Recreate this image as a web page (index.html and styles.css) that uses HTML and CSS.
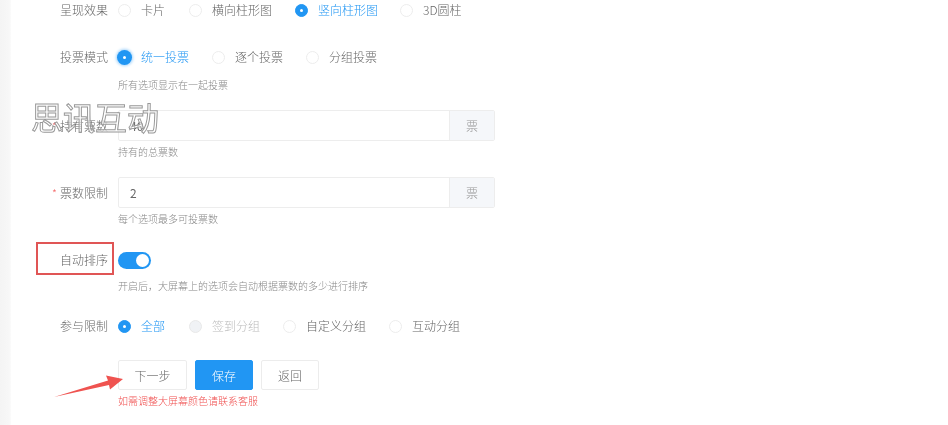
FILE: index.html
```html
<!DOCTYPE html>
<html lang="zh-CN">
<head>
<meta charset="utf-8">
<title>投票设置</title>
<link rel="stylesheet" href="styles.css">
</head>
<body>
<main class="page">
  <form class="form">
    <div class="row gap-17">
      <span class="label">呈现效果</span>
      <div class="radios">
        <label class="radio w-71"><i class="dot"></i>卡片</label>
        <label class="radio w-106"><i class="dot"></i>横向柱形图</label>
        <label class="radio w-105 on"><i class="dot"></i>竖向柱形图</label>
        <label class="radio"><i class="dot"></i>3D圆柱</label>
      </div>
    </div>

    <div class="row">
      <span class="label">投票模式</span>
      <div class="radios">
        <label class="radio w-94 on focus"><i class="dot"></i>统一投票</label>
        <label class="radio w-94"><i class="dot"></i>逐个投票</label>
        <label class="radio"><i class="dot"></i>分组投票</label>
      </div>
    </div>
    <p class="help help-4 gap-16">所有选项显示在一起投票</p>

    <div class="row tall">
      <span class="label"><em class="req">*</em>持有票数</span>
      <div class="group"><span class="value">40</span><span class="addon">票</span></div>
    </div>
    <p class="help gap-16">持有的总票数</p>

    <div class="row tall">
      <span class="label"><em class="req">*</em>票数限制</span>
      <div class="group"><span class="value">2</span><span class="addon">票</span></div>
    </div>
    <p class="help gap-17">每个选项最多可投票数</p>

    <div class="row">
      <span class="label">自动排序</span>
      <span class="switch"></span>
    </div>
    <p class="help gap-16">开启后，大屏幕上的选项会自动根据票数的多少进行排序</p>

    <div class="row gap-19">
      <span class="label">参与限制</span>
      <div class="radios">
        <label class="radio w-71 on"><i class="dot"></i>全部</label>
        <label class="radio w-94 off"><i class="dot"></i>签到分组</label>
        <label class="radio w-106"><i class="dot"></i>自定义分组</label>
        <label class="radio"><i class="dot"></i>互动分组</label>
      </div>
    </div>

    <div class="actions">
      <button type="button" class="btn next">下一步</button>
      <button type="button" class="btn primary">保存</button>
      <button type="button" class="btn back">返回</button>
    </div>
    <p class="help error">如需调整大屏幕颜色请联系客服</p>
  </form>

  <div class="watermark">思讯互动</div>
  <div class="callout"></div>
  <svg class="arrow" width="948" height="425" viewBox="0 0 948 425" aria-hidden="true">
    <polygon points="54,397 108,380.500 106,375.500 123,379 110,389.500 109,385" fill="#ef5350"/>
  </svg>
</main>
</body>
</html>
```
FILE: styles.css
```css
* { box-sizing: border-box; }
html, body { margin: 0; height: 100%; background: #fff; overflow: hidden; }
body { font-family: "Noto Sans CJK SC", "Liberation Sans", sans-serif; font-size: 12px; font-weight: 300; color: #666; }

.page { position: relative; width: 948px; height: 425px; overflow: hidden; filter: blur(0.3px); }
.page::before { content: ""; display: block; position: absolute; left: 0; top: 0; bottom: 0; width: 11px; background: linear-gradient(to right, #f4f4f4, #f7f7f7 80%, #fbfbfb); }

.form { margin: -5px 0 0; padding-left: 118px; }
.row { display: flex; align-items: center; height: 30px; position: relative; }
.row.tall { height: 31px; }
.label { position: absolute; right: 100%; margin-right: 10px; white-space: nowrap; line-height: 18px; }
.req { font-style: normal; color: #f56c6c; margin-right: 3px; font-size: 11px; }

.radios { display: flex; align-items: center; }
.radio { display: flex; align-items: center; white-space: nowrap; gap: 10px; line-height: 18px; }
.w-71 { width: 71px; }
.w-94 { width: 94px; }
.w-105 { width: 105px; }
.w-106 { width: 106px; }
.dot { display: block; width: 13px; height: 13px; border-radius: 50%; border: 1px solid #ececec; background: #fff; position: relative; flex: none; }
.radio.on { color: #2196f3; }
.radio.on .dot { background: #2196f3; border-color: #2196f3; }
.radio.on .dot::after { content: ""; position: absolute; left: 4px; top: 4px; width: 3px; height: 3px; border-radius: 50%; background: #fff; }
.radio.focus .dot { box-shadow: 0 0 0 1px #2196f3, 0 0 3px 2px #a5d4fa; }
.radio.off { color: #bbb; }
.radio.off .dot { background: #f0f2f5; border-color: #e8e8e8; }

.help { margin: 2px 0 0; font-size: 10px; line-height: 18px; color: #888; }
.help-4 { margin-top: 4px; }
.gap-16 { margin-bottom: 16px; }
.gap-17 { margin-bottom: 17px; }
.gap-19 { margin-bottom: 19px; }

.group { display: flex; width: 377px; height: 31px; border: 1px solid #ededed; border-radius: 2px; }
.value { flex: 1; padding-left: 11px; line-height: 29px; font-size: 12px; font-weight: 400; color: #666; }
.addon { width: 45px; background: #f5f7fa; border-left: 1px solid #ededed; text-align: center; line-height: 29px; color: #999; }

.switch { display: block; width: 33px; height: 17px; border-radius: 9px; background: #2196f3; position: relative; }
.switch::after { content: ""; position: absolute; right: 2px; top: 2px; width: 13px; height: 13px; border-radius: 50%; background: #fff; }

.actions { display: flex; gap: 8px; }
.btn { height: 30px; padding: 0; border: 1px solid #ececec; border-radius: 2px; background: #fff; color: #666; font: inherit; font-size: 12px; }
.next { width: 69px; }
.primary { width: 58px; background: #2196f3; border-color: #2196f3; color: #fff; }
.back { width: 58px; }
.error { color: #f05050; }

.watermark { position: absolute; left: 31px; top: 96px; font-size: 32px; font-weight: 400; line-height: 40px; white-space: nowrap; color: rgba(255, 255, 255, 0.6); -webkit-text-stroke: 1px #999; }
.callout { position: absolute; left: 36px; top: 242px; width: 78px; height: 33px; border: 2px solid #e05555; }
.arrow { position: absolute; left: 0; top: 0; pointer-events: none; }
```
